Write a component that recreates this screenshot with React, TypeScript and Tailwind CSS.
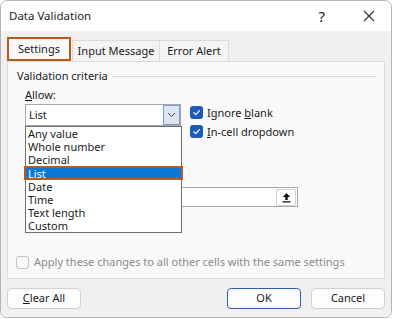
import React from 'react';

const Check = () => (
  <svg width="9" height="9" viewBox="0 0 10 10" fill="none">
    <path d="M2 5.2 L4.2 7.3 L8.2 2.8" stroke="white" strokeWidth="1.3" strokeLinecap="round" strokeLinejoin="round" />
  </svg>
);

const CheckBox = ({ label, u }: { label: string; u: number }) => (
  <div className="flex h-[19px] items-center">
    <div className="flex h-[13px] w-[13px] items-center justify-center rounded-[3px] bg-[#1d5cb6]">
      <Check />
    </div>
    <span className="ml-[4px] text-[11px] leading-[16px] text-[#1a1a1a]">
      {label.slice(0, u)}
      <span className="underline">{label[u]}</span>
      {label.slice(u + 1)}
    </span>
  </div>
);

const items = ['Any value', 'Whole number', 'Decimal', 'List', 'Date', 'Time', 'Text length', 'Custom'];

export default function App() {
  return (
    <div className="h-[319px] w-[394px] bg-white font-['Noto_Sans',sans-serif] text-[#1a1a1a]">
      <div className="flex h-[318px] w-[392px] flex-col overflow-hidden rounded-[7px] border border-[#b4b4b4]">
        {/* title bar */}
        <div className="flex h-[30px] shrink-0 items-center bg-white pl-[8px] pr-[16px]">
          <span className="text-[11.5px]">Data Validation</span>
          <span className="ml-auto text-[15px] text-[#222]">?</span>
          <svg className="ml-[38px]" width="12" height="12" viewBox="0 0 12 12">
            <path d="M1 1 L11 11 M11 1 L1 11" stroke="#333" strokeWidth="1.2" />
          </svg>
        </div>

        <div className="flex flex-1 flex-col bg-[#f0f0f0] px-[6px]">
          {/* tabs */}
          <div className="mt-[6px] flex h-[24px] items-end text-[11px]">
            <div className="z-10 flex h-[24px] w-[64px] items-center justify-center border-2 border-[#b85a18] bg-[#f9f9f9] pt-[1px]">
              Settings
            </div>
            <div className="ml-[1px] flex h-[21px] w-[88px] items-center justify-center border border-b-0 border-[#dadada] bg-[#f4f4f4]">
              Input Message
            </div>
            <div className="flex h-[21px] w-[69px] items-center justify-center border border-b-0 border-l-0 border-[#dadada] bg-[#f4f4f4]">
              Error Alert
            </div>
          </div>

          {/* panel */}
          <div className="relative h-[218px] border border-[#dcdcdc] bg-[#f9f9f9] text-[11px] leading-[16px]">
            <div className="mt-[6px] flex items-center pl-[9px] pr-[7px]">
              <span>Validation criteria</span>
              <div className="ml-[4px] h-px flex-1 bg-[#dadada]" />
            </div>

            <div className="mt-[2px] flex items-start pl-[17px]">
              <div className="flex w-[156px] flex-col">
                <span className="leading-[18px]">
                  <span className="underline">A</span>llow:
                </span>
                <div className="flex h-[22px] items-center border border-[#a8a8a8] bg-white pl-[3px]">
                  <span>List</span>
                  <div className="ml-auto flex h-[20px] w-[17px] items-center justify-center border border-[#7a9cc6] bg-[#dbe6f4]">
                    <svg width="9" height="6" viewBox="0 0 9 6">
                      <path d="M1 1 L4.5 4.5 L8 1" stroke="#444" strokeWidth="1" fill="none" />
                    </svg>
                  </div>
                </div>
              </div>
              <div className="ml-[9px] mt-[17px] flex flex-col">
                <CheckBox label="Ignore blank" u={7} />
                <CheckBox label="In-cell dropdown" u={0} />
              </div>
            </div>

            {/* source field */}
            <div className="mt-[46px] flex pl-[17px]">
              <div className="flex h-[20px] w-[273px] items-center justify-end border border-[#a8a8a8] bg-white">
                <div className="mr-[1px] flex h-[17px] w-[20px] items-center justify-center rounded-[2px] border border-[#cfcfcf] bg-white">
                  <svg width="11" height="11" viewBox="0 0 11 11">
                    <path d="M5.5 1 L1.8 5 H4.3 V8 H6.7 V5 H9.2 Z" fill="#111" />
                    <rect x="1.5" y="9.2" width="8" height="1.3" fill="#111" />
                  </svg>
                </div>
              </div>
            </div>

            {/* apply */}
            <div className="mt-[47px] flex items-center pl-[8px]">
              <div className="h-[13px] w-[13px] rounded-[3px] border border-[#c4c4c4] bg-[#f9f9f9]" />
              <span className="ml-[5px] text-[#8a8a8a]">Apply these changes to all other cells with the same settings</span>
            </div>

            {/* dropdown list */}
            <div className="absolute left-[17px] top-[64px] w-[157px] border border-[#6e6e6e] bg-white text-[11px] leading-[13px]">
              {items.map((it) =>
                it === 'List' ? (
                  <div key={it} className="-mx-[2px] flex h-[14px] items-center border-2 border-[#b85a18]">
                    <div className="flex h-full flex-1 items-center bg-[#0a78d4] pl-[2px] text-white">{it}</div>
                  </div>
                ) : (
                  <div key={it} className="flex h-[13px] items-center pl-[2px]">
                    {it}
                  </div>
                )
              )}
            </div>
          </div>

          {/* buttons */}
          <div className="mt-[9px] flex text-[11px]">
            <div className="flex h-[21px] w-[74px] items-center justify-center rounded-[4px] border border-[#d0d0d0] bg-[#fdfdfd]">
              <span>
                <span className="underline">C</span>lear All
              </span>
            </div>
            <div className="ml-auto flex h-[21px] w-[74px] items-center justify-center rounded-[4px] border border-[#2f5fa8] bg-[#fdfdfd]">
              OK
            </div>
            <div className="ml-[10px] flex h-[21px] w-[74px] items-center justify-center rounded-[4px] border border-[#d0d0d0] bg-[#fdfdfd]">
              Cancel
            </div>
          </div>
        </div>
      </div>
    </div>
  );
}
